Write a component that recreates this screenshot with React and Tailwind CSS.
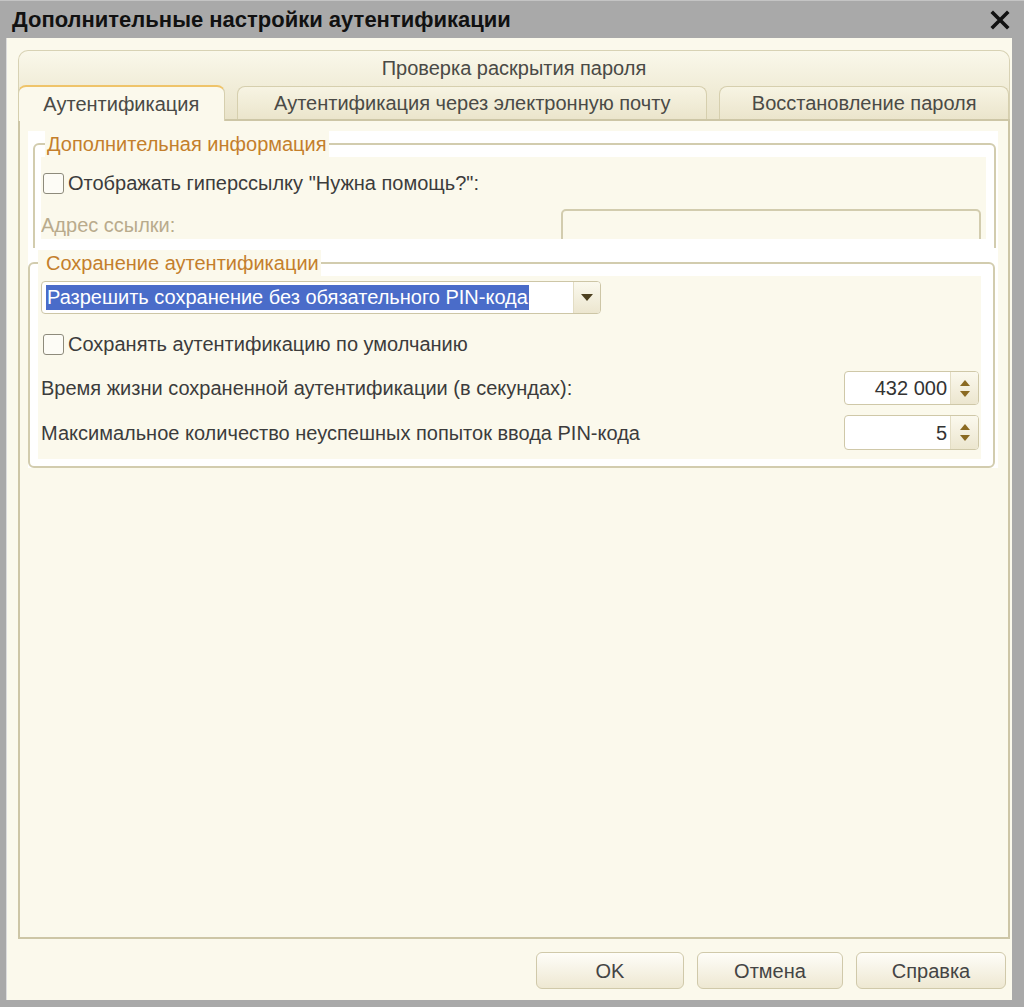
import React from "react";

function Checkbox() {
  return (
    <div className="w-[21px] h-[21px] rounded-[3px] border-[1.5px] border-[#8e8b7c] bg-[#fdfcf6] shrink-0" />
  );
}

function Spin({ value }) {
  return (
    <div className="w-[135px] h-full flex rounded-[4px] border-[1.5px] border-[#cfc8a8] bg-white overflow-hidden">
      <div className="flex-1 flex items-center justify-end pr-[3px] text-[20px] text-[#333]">{value}</div>
      <div className="w-[28px] flex flex-col items-center justify-center gap-[5px] bg-gradient-to-b from-[#fbf9ee] to-[#ece6cf] border-l border-[#e3ddc4]">
        <svg width="10" height="6" viewBox="0 0 10 6"><path d="M0 6 L5 0 L10 6 Z" fill="#8a6a22" /></svg>
        <svg width="10" height="6" viewBox="0 0 10 6"><path d="M0 0 L10 0 L5 6 Z" fill="#8a6a22" /></svg>
      </div>
    </div>
  );
}

function Button({ children, w }) {
  return (
    <div
      className={`${w} h-[37px] flex items-center justify-center rounded-[6px] border-[1.5px] border-[#d0c9aa] bg-gradient-to-b from-[#fefdf8] to-[#eee8d2] text-[20px] text-[#444]`}
    >
      {children}
    </div>
  );
}

export default function App() {
  return (
    <div className="w-[1024px] h-[1007px] bg-[#a9a9a9] flex flex-col font-['Liberation_Sans',Arial,sans-serif] overflow-hidden">
      {/* Title bar */}
      <div className="h-[38px] shrink-0 flex items-center justify-between pl-[12px] pr-[14px] border-t border-[#c4c4c4]">
        <div className="text-[22px] font-bold text-[#111]">
          Дополнительные настройки аутентификации
        </div>
        <svg width="20" height="20" viewBox="0 0 20 20">
          <path d="M3 3 L17 17 M17 3 L3 17" stroke="#111" strokeWidth="3.6" strokeLinecap="square" />
        </svg>
      </div>

      {/* Body */}
      <div className="flex-1 ml-[6px] mr-[12px] mb-[7px] bg-[#fbf9ec] flex flex-col border-l border-[#dcdcdc]">
        {/* Tab strip */}
        <div className="ml-[11px] mr-[2px] mt-[12px] rounded-t-[10px] border-[1.5px] border-b-0 border-[#d8d2b4] bg-gradient-to-b from-[#faf8ea] to-[#e9e3c9] flex flex-col">
          <div className="h-[34px] flex items-center justify-center text-[20px] text-[#4a4a46]">
            Проверка раскрытия пароля
          </div>
          <div className="flex gap-[12px] items-end ml-[-1.5px]">
            <div className="relative z-10 w-[208px] h-[36px] -mb-[2px] rounded-t-[8px] border-[1.5px] border-b-0 border-[#d6cfae] border-t-[#efc46a] border-t-2 bg-[#fbf9ec] flex items-center justify-center text-[20px] text-[#4a4a46]">
              Аутентификация
            </div>
            <div className="w-[471px] h-[33px] rounded-t-[8px] border-[1.5px] border-b-0 border-[#d6cfae] bg-gradient-to-b from-[#f7f4e3] to-[#ebe5cc] flex items-center justify-center text-[20px] text-[#4a4a46]">
              Аутентификация через электронную почту
            </div>
            <div className="w-[290px] h-[33px] rounded-t-[8px] border-[1.5px] border-b-0 border-[#d6cfae] bg-gradient-to-b from-[#f7f4e3] to-[#ebe5cc] flex items-center justify-center text-[20px] text-[#4a4a46]">
              Восстановление пароля
            </div>
          </div>
        </div>

        {/* Tab panel */}
        <div className="ml-[11px] mr-[2px] h-[820px] border-2 border-[#cdc6a6] flex flex-col">
          <div className="ml-[8px] mt-[10px] w-[970px] bg-white flex flex-col">
            {/* Group 1 */}
            <div className="h-[117px] overflow-hidden">
              <fieldset className="ml-[5px] w-[963px] h-[160px] border-2 border-[#d2ccae] rounded-[6px] p-0 m-0">
                <legend className="ml-[10px] h-[26px] px-[2px] bg-[#fbf9ec] text-[20px] text-[#c47f2c] leading-[26px]">
                  Дополнительная информация
                </legend>
                <div className="ml-[6px] mr-[8px] h-[82px] bg-[#fbf9ec] overflow-hidden flex flex-col">
                  <div className="mt-[15px] h-[22px] flex items-center ml-[2px]">
                    <Checkbox />
                    <span className="ml-[4px] text-[20px] text-[#3c3c3c]">
                      Отображать гиперссылку "Нужна помощь?":
                    </span>
                  </div>
                  <div className="mt-[15px] h-[40px] flex items-start">
                    <span className="text-[20px] text-[#b9ab8c] leading-[32px]">Адрес ссылки:</span>
                    <div className="ml-auto mr-[5px] w-[420px] h-[40px] rounded-[5px] border-2 border-[#d2ccae] bg-[#fbf9ec]" />
                  </div>
                </div>
              </fieldset>
            </div>

            {/* Group 2 */}
            <fieldset className="mt-[2px] w-[967px] border-2 border-[#d2ccae] rounded-[6px] p-0 m-0 bg-white">
              <legend className="ml-[8px] h-[26px] pl-[8px] pr-[2px] bg-[#fbf9ec] text-[20px] text-[#c47f2c] leading-[26px]">
                Сохранение аутентификации
              </legend>
              <div className="ml-[8px] mr-[12px] mb-[7px] bg-[#fbf9ec] pl-[3px] pr-[2px] pt-[5px] pb-[9px] flex flex-col">
                <div className="w-[560px] h-[33px] flex rounded-[4px] border-[1.5px] border-[#cdc6a6] bg-white overflow-hidden">
                  <div className="flex-1 flex items-center pl-[4px]">
                    <span className="bg-[#4a6cc9] text-white text-[20px] leading-[25px] px-[1px]">
                      Разрешить сохранение без обязательного PIN-кода
                    </span>
                  </div>
                  <div className="w-[27px] flex items-center justify-center bg-gradient-to-b from-[#fbf9ee] to-[#ece6cf] border-l border-[#e3ddc4]">
                    <svg width="12" height="7" viewBox="0 0 12 7"><path d="M0 0 L12 0 L6 7 Z" fill="#4d4020" /></svg>
                  </div>
                </div>
                <div className="mt-[19px] h-[22px] flex items-center ml-[2px]">
                  <Checkbox />
                  <span className="ml-[4px] text-[20px] text-[#3c3c3c]">
                    Сохранять аутентификацию по умолчанию
                  </span>
                </div>
                <div className="mt-[16px] h-[34px] flex items-center justify-between">
                  <span className="text-[20px] text-[#3c3c3c]">
                    Время жизни сохраненной аутентификации (в секундах):
                  </span>
                  <Spin value="432 000" />
                </div>
                <div className="mt-[10px] h-[35px] flex items-center justify-between">
                  <span className="text-[20px] text-[#3c3c3c]">
                    Максимальное количество неуспешных попыток ввода PIN-кода
                  </span>
                  <Spin value="5" />
                </div>
              </div>
            </fieldset>
          </div>
        </div>

        {/* Buttons */}
        <div className="mt-[13px] flex justify-end gap-[13px] pr-[6px]">
          <Button w="w-[148px]">OK</Button>
          <Button w="w-[146px]">Отмена</Button>
          <Button w="w-[150px]">Справка</Button>
        </div>
      </div>
    </div>
  );
}
